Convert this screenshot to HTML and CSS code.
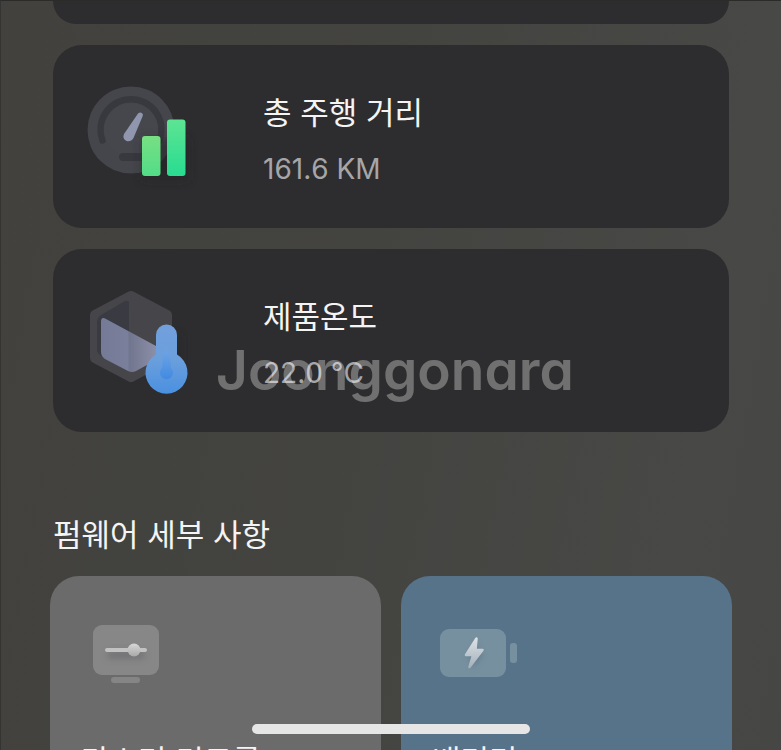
FILE: index.html
```
<!DOCTYPE html>
<html lang="ko">
<head>
    <meta charset="UTF-8">
    <meta name="viewport" content="width=device-width, initial-scale=1.0">
    <title>펌웨어 세부 사항</title>
    <link rel="stylesheet" href="styles.css">
</head>
<body>
    <main class="page">
        <section class="stats">
            <div class="card card-cut"></div>

            <article class="card">
                <svg class="card-icon" viewBox="0 2 140 130" aria-hidden="true">
                    <defs>
                        <linearGradient id="barShort" x1="0" y1="0" x2="0" y2="1">
                            <stop offset="0" stop-color="#77df83"/>
                            <stop offset="1" stop-color="#52dd88"/>
                        </linearGradient>
                        <linearGradient id="barTall" x1="0" y1="0" x2="0" y2="1">
                            <stop offset="0" stop-color="#5de493"/>
                            <stop offset="1" stop-color="#28dc90"/>
                        </linearGradient>
                        <filter id="soft" x="-50%" y="-50%" width="200%" height="200%">
                            <feGaussianBlur stdDeviation="5"/>
                        </filter>
                    </defs>
                    <circle cx="61" cy="60" r="43.500" fill="#45464b"/>
                    <path d="M32.500 70.500A30.500 30.500 0 1 1 89.500 70.500" fill="none" stroke="#38393f" stroke-width="6.500" stroke-linecap="round"/>
                    <circle cx="61" cy="60" r="27" fill="#46474d"/>
                    <rect x="49" y="83" width="30" height="8" rx="4" fill="#38393f"/>
                    <path d="M68 43.500Q71 41 73 44.500L72.500 46.500L63.500 68Q61 72 56.500 71Q52 68.500 54 64Z" fill="#8f96ae"/>
                    <rect x="72" y="68" width="46" height="42" fill="#222225" opacity=".5" filter="url(#soft)"/>
                    <rect x="72" y="66" width="18.500" height="40" rx="3" fill="url(#barShort)"/>
                    <rect x="97" y="49.500" width="18.500" height="56.500" rx="3" fill="url(#barTall)"/>
                </svg>
                <div class="card-text">
                    <h2>총 주행 거리</h2>
                    <p>161.6 KM</p>
                </div>
            </article>

            <article class="card">
                <svg class="card-icon" viewBox="0 0 140 130" aria-hidden="true">
                    <defs>
                        <linearGradient id="thermo" x1="0" y1="0" x2="0" y2="1">
                            <stop offset="0" stop-color="#72a0dc"/>
                            <stop offset=".5" stop-color="#6b9fdc"/>
                            <stop offset="1" stop-color="#4a90e0"/>
                        </linearGradient>
                        <linearGradient id="mercury" x1="0" y1="0" x2="0" y2="1">
                            <stop offset="0" stop-color="#6ca3e5"/>
                            <stop offset="1" stop-color="#3c87e2"/>
                        </linearGradient>
                        <linearGradient id="liquid" x1="0" y1="0" x2="1" y2="0">
                            <stop offset="0" stop-color="#757b97"/>
                            <stop offset=".48" stop-color="#7a7f9b"/>
                            <stop offset=".52" stop-color="#71768e"/>
                            <stop offset="1" stop-color="#8b90a8"/>
                        </linearGradient>
                    </defs>
                    <path d="M61 20L97 39V82L61 101L25 82V39Z" fill="#46464a" stroke="#46464a" stroke-width="10" stroke-linejoin="round"/>
                    <path d="M59 26V95L30 79Q27 77 27 73V46Q27 42 31 39L55 25Q58 24 59 26Z" fill="#393a42"/>
                    <path d="M36 43L86 70V84L66 95Q62 97 58 95L35 83Q31 80 31 76V46Q31 40 36 43Z" fill="url(#liquid)"/>
                    <path d="M98 60H111V92H98Z" fill="#202023" opacity=".35" filter="url(#soft)"/>
                    <path d="M86 59A10.500 10.500 0 0 1 107 59V78.500A21 21 0 1 1 86 78.500Z" fill="url(#thermo)"/>
                    <path d="M93 79A3.500 3.500 0 0 1 100 79L101 92A6.500 6.500 0 1 1 92 92Z" fill="url(#mercury)" opacity=".8"/>
                </svg>
                <div class="card-text">
                    <h2>제품온도</h2>
                    <p>22.0 °C</p>
                </div>
                <span class="watermark">Joonggonara</span>
            </article>
        </section>

        <h2 class="section-title">펌웨어 세부 사항</h2>

        <section class="tiles">
            <article class="tile">
                <svg class="tile-icon" viewBox="0 0 84 64" aria-hidden="true">
                    <defs>
                        <linearGradient id="metal" x1="0" y1="0" x2="0" y2="1">
                            <stop offset="0" stop-color="#d8d8d8"/>
                            <stop offset="1" stop-color="#a8a8a8"/>
                        </linearGradient>
                        <filter id="shade" x="-50%" y="-100%" width="200%" height="300%">
                            <feGaussianBlur stdDeviation="3"/>
                        </filter>
                    </defs>
                    <rect x="4" y="3" width="66" height="50" rx="9" fill="#878787"/>
                    <rect x="22" y="55" width="29" height="6" rx="3" fill="#858585"/>
                    <rect x="18" y="29" width="38" height="8" rx="4" fill="#606068" opacity=".5" filter="url(#shade)"/>
                    <rect x="16" y="26" width="42" height="4" rx="2" fill="#c2c2c2"/>
                    <circle cx="45" cy="28" r="6.500" fill="url(#metal)"/>
                </svg>
                <h3>마스터 컨트롤</h3>
            </article>

            <article class="tile tile-blue">
                <svg class="tile-icon" viewBox="0 0 84 64" aria-hidden="true">
                    <defs>
                        <linearGradient id="bolt" x1="0" y1="0" x2="0" y2="1">
                            <stop offset="0" stop-color="#dce1e5"/>
                            <stop offset="1" stop-color="#a5b2bc"/>
                        </linearGradient>
                    </defs>
                    <rect x="0" y="7" width="66" height="48" rx="9" fill="#77909f"/>
                    <rect x="70" y="21" width="7" height="20" rx="3" fill="#77909f"/>
                    <path d="M36.500 16.500L26 33H33L29.500 45L42.500 28H35.500Z" transform="translate(1 3)" fill="#506678" opacity=".6" filter="url(#shade)"/>
                    <path d="M36.500 16.500L26 33H33L29.500 45L42.500 28H35.500Z" fill="url(#bolt)" stroke="url(#bolt)" stroke-width="2.500" stroke-linejoin="round"/>
                </svg>
                <h3>배터리</h3>
            </article>
        </section>
    </main>
    <div class="home-indicator"></div>
</body>
</html>
```
FILE: styles.css
```
* {
    box-sizing: border-box;
}

body {
    margin: 0;
    height: 100vh;
    overflow: hidden;
    font-family: Inter, "Noto Sans CJK KR", sans-serif;
    color: #f4f4f4;
    background: linear-gradient(100deg, #42413d 0%, #434340 45%, #484846 85%, #464644 100%);
    border-top: 1px solid #2b2b2a;
    border-left: 1px solid #343432;
}

h2, h3, p {
    margin: 0;
    font-weight: 400;
}

.page {
    padding: 0 49px;
}

.stats {
    display: flex;
    flex-direction: column;
    gap: 21px;
    padding: 0 3px;
}

.card {
    position: relative;
    display: flex;
    align-items: center;
    height: 183px;
    padding: 0 17px;
    border-radius: 29px;
    background-color: #2d2d2f;
}

.card-cut {
    height: 23px;
    border-radius: 0 0 29px 29px;
}

.card-icon {
    width: 140px;
    height: 130px;
    flex: none;
}

.card-text {
    margin-left: 53px;
    padding-top: 4px;
}

.card-text h2,
.section-title {
    font-size: 31px;
    line-height: 48px;
}

.card-text h2 {
    margin-bottom: 12px;
}

.card-text p {
    font-size: 28px;
    line-height: 40px;
    font-kerning: none;
    color: #a6a6a8;
}

/* overlay on the temperature card */
.watermark {
    position: absolute;
    left: 163px;
    top: 81px;
    font-size: 55px;
    font-weight: 600;
    line-height: 80px;
    font-feature-settings: "cv11";
    color: rgba(255, 255, 255, 0.32);
}

.section-title {
    margin: 79px 3px 17px;
}

.tiles {
    display: grid;
    grid-template-columns: 1fr 1fr;
    gap: 20px;
}

.tile {
    height: 330px;
    padding: 46px 31px;
    border-radius: 29px;
    background-color: #6b6b6b;
}

.tile-blue {
    background-color: #57738a;
}

.tile-icon {
    display: block;
    width: 84px;
    height: 64px;
    margin-left: 8px;
}

.tile h3 {
    margin-top: 51px;
    font-size: 31px;
    line-height: 48px;
}

.home-indicator {
    position: fixed;
    left: 50%;
    bottom: 16px;
    width: 278px;
    height: 10px;
    margin-left: -139px;
    border-radius: 5px;
    background-color: #e6e6e6;
}
```
